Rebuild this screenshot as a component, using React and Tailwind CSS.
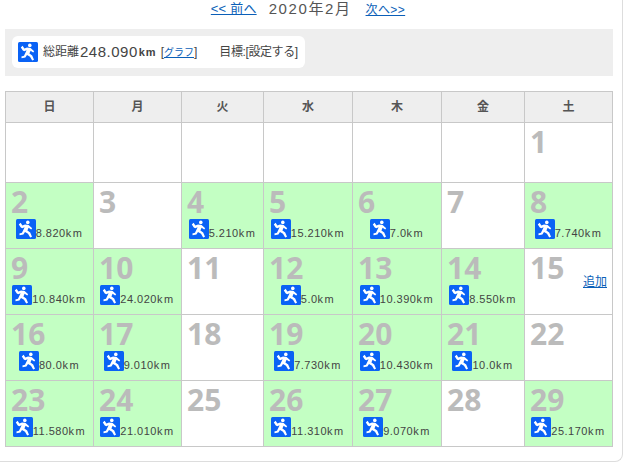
import React from 'react';

const jp = "font-['Liberation_Sans','Noto_Sans_CJK_JP',sans-serif]";

const RunIcon = ({ className }) => (
  <svg viewBox="0 0 20 20" className={className}>
    <rect width="20" height="20" rx="1.5" fill="#0a62f5" />
    <circle cx="11.8" cy="3.4" r="1.8" fill="#fff" />
    <path
      d="M2.8 5.4 L4.6 3.8 L6.4 6.6 L9 5.4 L12.6 5.9 L16.2 9.2 L15.2 10.4 L12.6 8.8 L11.4 11.4 L14.2 13.6 L16 17.8 L14.2 18.6 L12 14.8 L9 13 L7.4 15.6 L3.6 16.2 L3.4 14.6 L6 13.8 L8.6 8.2 L6.2 9.2 L4.8 8.4 Z"
      fill="#fff"
    />
  </svg>
);

const colWidths = [88, 88, 82, 89, 89, 83, 88];
const dayNames = ['日', '月', '火', '水', '木', '金', '土'];

const weeks = [
  [[], [], [], [], [], [], [1]],
  [[2, '8.820'], [3], [4, '5.210'], [5, '15.210'], [6, '7.0'], [7], [8, '7.740']],
  [[9, '10.840'], [10, '24.020'], [11], [12, '5.0'], [13, '10.390'], [14, '8.550'], [15]],
  [[16, '80.0'], [17, '9.010'], [18], [19, '7.730'], [20, '10.430'], [21, '10.0'], [22]],
  [[23, '11.580'], [24, '21.010'], [25], [26, '11.310'], [27, '9.070'], [28], [29, '25.170']],
];

const DayCell = ({ day, km }) => (
  <td className={`border border-[#c8c8c8] p-0 align-top ${km ? 'bg-[#c3ffc3]' : 'bg-white'}`}>
    {day && (
      <div className="flex justify-between pl-[5px] pr-[5px] pt-[1px]">
        <span className="font-['Open_Sans',sans-serif] text-[30px] leading-[35px] font-bold text-[#bbbbbb]">{day}</span>
        {day === 15 && <a href="#" className={`mt-[24px] text-xs leading-[16px] text-[#0b5fb8] underline ${jp}`}>追加</a>}
      </div>
    )}
    {km && (
      <div className="flex items-end justify-center">
        <RunIcon className="h-5 w-5 shrink-0" />
        <span className={`whitespace-nowrap text-[11px] leading-[12px] text-[#444444] ${jp}`}>
          <span className="tracking-[0.5px]">{km}</span>
          <span className="tracking-[1.5px]">km</span>
        </span>
      </div>
    )}
  </td>
);

export default function App() {
  return (
    <div className={`h-[462px] w-[623px] rounded-br-lg border-r border-b border-[#dddddd] bg-white pl-[5px] text-[#444444] ${jp}`}>
      <div className="flex h-[29px] w-[608px] items-start justify-center pr-[2px] leading-[20px]">
        <a href="#" className="text-[13px] leading-[18px] tracking-[0.2px] text-[#0b5fb8] underline">&lt;&lt; 前へ</a>
        <span className="ml-3 text-[15px] leading-[18px] tracking-[1.6px] text-[#555555]">2020年2月</span>
        <a href="#" className="ml-3.5 text-xs leading-[20px] tracking-[0.4px] text-[#0b5fb8] underline">次へ&gt;&gt;</a>
      </div>

      <div className="h-[47px] w-[608px] bg-[#eeeeee] pl-[7px] pt-[7px]">
        <div className="flex h-8 w-[293px] items-center whitespace-nowrap rounded-md bg-white pl-1.5 text-xs">
          <RunIcon className="h-5 w-5 shrink-0" />
          <span className="ml-[5px]">総距離</span>
          <span className="ml-[1px] text-[15px] tracking-[0.5px]">248.090</span>
          <span className="ml-[1px] text-[11px] font-bold tracking-[1px]">km</span>
          <span className="ml-[4px]">[<a href="#" className="text-[10px] text-[#0b5fb8] underline">グラフ</a>]</span>
          <span className="ml-[22px] tracking-[-0.4px]">目標:[設定する]</span>
        </div>
      </div>

      <table className="mt-[15px] w-[608px] table-fixed border-collapse">
        <colgroup>
          {colWidths.map((w, i) => (
            <col key={i} style={{ width: w }} />
          ))}
        </colgroup>
        <thead>
          <tr className="h-[31px] bg-[#eeeeee]">
            {dayNames.map((d) => (
              <th key={d} className="border border-[#c8c8c8] p-0 text-xs font-bold text-[#555555]">{d}</th>
            ))}
          </tr>
        </thead>
        <tbody>
          {weeks.map((week, w) => (
            <tr key={w} className={w === 0 ? 'h-[60px]' : 'h-[66px]'}>
              {week.map(([day, km], i) => (
                <DayCell key={i} day={day} km={km} />
              ))}
            </tr>
          ))}
        </tbody>
      </table>
    </div>
  );
}
